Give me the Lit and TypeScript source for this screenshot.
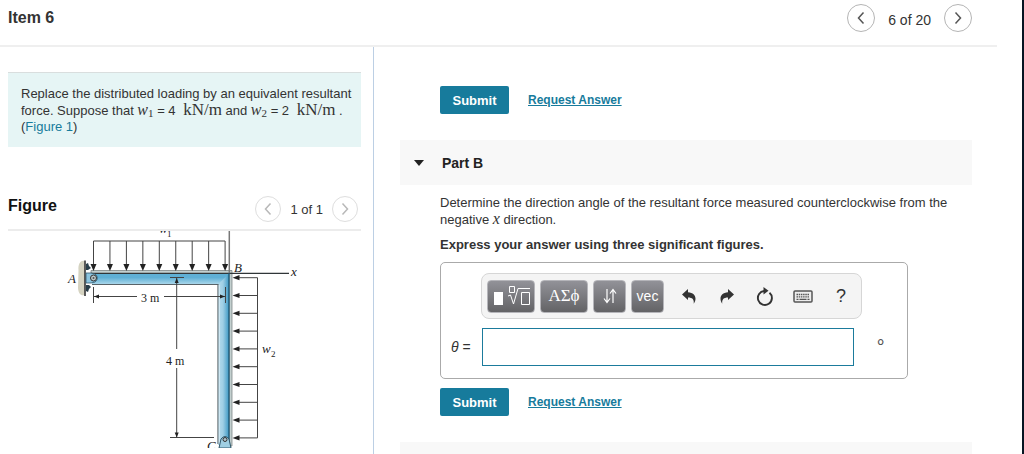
import { LitElement, html, svg, css } from "lit";
import { customElement, property } from "lit/decorators.js";

const chevron = (dir: "left" | "right") => html`<svg viewBox="0 0 12 14" width="12" height="14" aria-hidden="true">
  <path d=${dir === "left" ? "M8.5 1.5 3.5 7l5 5.5" : "M3.5 1.5 8.5 7l-5 5.5"} fill="none" stroke="currentColor" stroke-width="1.5" />
</svg>`;

@customElement("page-stepper")
class PageStepper extends LitElement {
  @property() label = "";
  @property() noun = "item";
  @property({ type: Boolean, reflect: true }) muted = false;

  static styles = css`
    :host { display: flex; align-items: center; gap: 13px; font-size: 14px; color: #333; }
    :host([muted]) { font-size: 13px; gap: 9px; }
    .step {
      box-sizing: border-box; width: 28px; height: 28px; padding: 0; border-radius: 50%;
      border: 1px solid #b5b5b5; background: #fff; color: #555;
      display: flex; align-items: center; justify-content: center;
    }
    :host([muted]) .step { width: 26px; height: 26px; border-color: #dedede; color: #b8b8b8; }
    .label { padding-top: 3px; white-space: nowrap; }
  `;

  render() {
    return html`
      <button class="step" aria-label="Previous ${this.noun}" ?disabled=${this.muted}>${chevron("left")}</button>
      <span class="label">${this.label}</span>
      <button class="step" aria-label="Next ${this.noun}" ?disabled=${this.muted}>${chevron("right")}</button>
    `;
  }
}

@customElement("beam-figure")
class BeamFigure extends LitElement {
  static styles = css`
    :host { display: block; }
    .drawing { display: block; width: 352px; max-width: 100%; height: auto; }
    .label { font: 12px "Liberation Serif", serif; fill: #222; }
    .symbol { font: italic 13px "Liberation Serif", serif; fill: #222; }
    .index { font: 9px "Liberation Serif", serif; fill: #222; }
    .thin { stroke: #444; stroke-width: 1; fill: none; }
    .head { fill: #222; }
  `;

  render() {
    const down = Array.from({ length: 9 }, (_, i) => 93.5 + i * 16.45);
    const side = Array.from({ length: 10 }, (_, i) => 277.7 + i * 17.8);
    return html`<svg class="drawing" viewBox="8 231 352 217" role="img" aria-label="Bent beam ABC under two distributed loads">
      <defs>
        <linearGradient id="top" x1="0" y1="0" x2="0" y2="1">
          <stop offset="0" stop-color="#5fb0d5" /><stop offset=".35" stop-color="#5fb0d5" /><stop offset="1" stop-color="#b4dcee" />
        </linearGradient>
        <linearGradient id="leg" x1="0" y1="0" x2="1" y2="0">
          <stop offset="0" stop-color="#b4dcee" /><stop offset=".45" stop-color="#9fcfe5" /><stop offset="1" stop-color="#3c98c4" />
        </linearGradient>
      </defs>
      <path d="M91 270.5H232V446H229V273.5H91z" fill="#c3d0cf" stroke="#707878" stroke-width=".7" />
      <path d="M92 273.5H229V285H92z" fill="url(#top)" />
      <path d="M218 284.5 229 273.5V445H218z" fill="url(#leg)" />
      <path d="M92 284.5H218V444" fill="none" stroke="#596368" stroke-width="1.2" />
      <path d="M219.2 285V444" stroke="#dceef5" stroke-width="1" />
      <path d="M91 273.4H289" stroke="#303638" stroke-width="1.2" />
      <path d="M229 273V445" stroke="#1d5571" stroke-width="1.3" />
      <path d="M229.3 231V273" stroke="#777" stroke-width="1.5" />

      <path d="M84.5 261C80 260 78 265 78.5 270L78 288C78.5 294 81 296 84.5 295z" fill="#d5d3c1" />
      <path d="M85 260.5V296" stroke="#333" stroke-width="1.6" />
      <path d="M86 264l2-1 1 3 2 2-3 2h-2zM86 285l3 0 2 2-2 2-1 3-2-1z" fill="#293e49" />
      <path d="M86 273h5l4 1c3 2 3 6 0 8l-4 1h-5z" fill="#8bc4df" stroke="#30576a" stroke-width=".8" />
      <circle cx="93.5" cy="278" r="3" fill="#b8c6c8" stroke="#333" />
      <circle cx="93.5" cy="278" r="1" fill="#555" />

      <path class="thin" d="M93.5 241H225.1" />
      ${down.map((x) => svg`<path class="thin" d="M${x} 241V266" /><path class="head" d="M${x - 3} 264h6l-3 7z" />`)}
      <path class="thin" d="M257.5 277.7V437.9" />
      ${side.map((y) => svg`<path class="thin" d="M257.5 ${y}H236" /><path class="head" d="M239.5 ${y - 2.6}v5.2l-7-2.6z" />`)}

      <path class="thin" d="M93.5 287V303M225.5 287V303M94 296.5H137M164 296.5H225" />
      <path class="head" d="M94 296.5l5-2v4zM225 296.5l-5-2v4z" />
      <path class="thin" d="M170 277.5H184M176.7 278V349M176.7 368V437M170 437.5H214" />
      <path class="head" d="M176.7 278l-2 5h4zM176.7 437.5l-2-5h4z" />

      <path d="M219 448l2-9q4-5 8 0l2 9z" fill="#9fcfe3" stroke="#30576a" stroke-width="1" />
      <circle cx="225" cy="439.5" r="2" fill="#aac0c8" stroke="#333" />

      <text class="symbol" x="159" y="233">w</text><text class="index" x="167" y="237">1</text>
      <text class="symbol" x="68" y="283">A</text>
      <text class="symbol" x="234" y="272">B</text>
      <text class="symbol" x="207" y="450">C</text>
      <text class="symbol" x="291" y="276">x</text>
      <text class="symbol" x="262" y="353">w</text><text class="index" x="271" y="357">2</text>
      <text class="label" x="141" y="302">3 m</text>
      <text class="label" x="166" y="365">4 m</text>
    </svg>`;
  }
}

@customElement("math-answer")
class MathAnswer extends LitElement {
  static styles = css`
    :host { display: block; }
    .box { box-sizing: border-box; max-width: 468px; border: 1px solid #aaa; border-radius: 5px; padding: 10px 44px 12px 10px; }
    .tools {
      box-sizing: border-box; margin-left: 30px; margin-right: 1px; height: 46px; padding: 0 5px; border: 1px solid #d6d6d6; border-radius: 8px;
      background: #f4f4f4; display: flex; align-items: center; gap: 5px;
    }
    .key, .tool { box-sizing: border-box; padding: 0; border: 0; display: flex; align-items: center; justify-content: center; }
    .key {
      height: 33px; width: 33px; border: 1px solid #b5b5ba; border-radius: 4px; color: #fff;
      background: linear-gradient(#929298, #636366); font: 14px "Liberation Sans", sans-serif;
    }
    .wide { width: 48px; }
    .greek { font: 17px "Liberation Serif", serif; }
    .icons { display: flex; margin-left: 6px; gap: 10px; }
    .tool { width: 28px; height: 30px; background: none; color: #333; font: 18px "Liberation Sans", sans-serif; }
    .row { display: flex; align-items: center; margin-top: 9px; }
    .name { width: 31px; font-size: 14px; color: #333; white-space: nowrap; }
    .entry { flex: 1; min-width: 0; display: flex; margin-right: -24px; }
    .field {
      box-sizing: border-box; flex: 1; min-width: 0; height: 38px; border: 1px solid #1b7b9c; border-radius: 0;
      padding: 0 8px; font: 14px "Liberation Sans", sans-serif; outline: none;
    }
    .unit { width: 33px; padding-left: 0; text-align: center; box-sizing: border-box; font-size: 18px; line-height: 26px; color: #555; padding-left: 20px; }
  `;

  render() {
    return html`<div class="box">
      <div class="tools" role="toolbar" aria-label="Equation tools">
        <button class="key wide" aria-label="Templates">
          <svg width="40" height="25" viewBox="0 0 40 25" fill="none" stroke="#fff">
            <path d="M3 8h9v13H3z" fill="#fff" stroke="none" />
            <path d="M18.5 2.500h5v6h-5zM17 12l2.500-1 3 9 4.500-15.500H39M30.500 8.500h8v12h-8z" />
          </svg>
        </button>
        <button class="key wide greek" aria-label="Symbols">ΑΣϕ</button>
        <button class="key" aria-label="Arrows">
          <svg width="14" height="18" viewBox="0 0 14 18" fill="none" stroke="#fff"><path d="M4 2v13M1 11.500 4 15.500l3-4M10 16V3M7 6.500 10 2.500l3 4" stroke-width="1.200" /></svg>
        </button>
        <button class="key" aria-label="Vector">vec</button>
        <div class="icons">
          <button class="tool" aria-label="Undo">
            <svg width="14" height="15" viewBox="0 0 14 15"><path d="M0 5.500 6 0v3.200c5 .2 7.500 3.300 7.500 6.300 0 2-.6 3.500-1.800 5.300.6-4.300-1.200-6.300-5.700-6.300V11z" fill="currentColor" /></svg>
          </button>
          <button class="tool" aria-label="Redo">
            <svg width="14" height="15" viewBox="0 0 14 15"><path d="M14 5.500 8 0v3.200C3 3.400.5 6.500.5 9.500c0 2 .6 3.500 1.800 5.300C1.700 10.500 3.500 8.500 8 8.500V11z" fill="currentColor" /></svg>
          </button>
          <button class="tool" aria-label="Reset">
            <svg width="18" height="19" viewBox="0 0 18 19"><path d="M13.500 5.700A7 7 0 1 1 8.500 4" fill="none" stroke="currentColor" stroke-width="1.900" /><path d="M7.500 0 12.500 3.800 7.500 7.500z" fill="currentColor" /></svg>
          </button>
          <button class="tool" aria-label="Keyboard">
            <svg width="20" height="16" viewBox="0 0 20 16"><rect x="1" y="3" width="18" height="11" rx="1" fill="#ededed" stroke="#555" stroke-width="1.500" /><path d="M3.500 6.500h13M3.500 8.800h13" stroke="#555" stroke-width="1.300" stroke-dasharray="1.500 .7" /><path d="M3.500 11.300h2M6.500 11.300h7M14.500 11.300h2" stroke="#555" stroke-width="1.300" /></svg>
          </button>
          <button class="tool" aria-label="Help">?</button>
        </div>
      </div>
      <div class="row">
        <label class="name" for="theta"><i>θ</i> =</label>
        <div class="entry"><input class="field" id="theta" type="text" /><span class="unit">∘</span></div>
      </div>
    </div>`;
  }
}

@customElement("app-root")
class AppRoot extends LitElement {
  static styles = css`
    :host {
      box-sizing: border-box; display: flex; flex-direction: column; min-height: 100vh; background: #fff;
      border-right: 2px solid #071523; font: 13px/16px "Liberation Sans", Arial, sans-serif; color: #333;
    }
    .header {
      box-sizing: border-box; height: 47px; margin-right: 25px; padding: 4px 25px 0 8px; border-bottom: 2px solid #efefef;
      display: flex; justify-content: space-between; align-items: flex-start;
    }
    .item { margin: 5px 0 0; font-size: 16px; line-height: 18px; color: #333; }
    .columns { flex: 1; display: grid; grid-template-columns: 374px minmax(0, 1fr); }
    .left { box-sizing: border-box; border-right: 1px solid #bccfe4; padding: 25px 12px 0 8px; }
    .prompt { box-sizing: border-box; min-height: 75px; border-top: 1px solid #d9dede; background: #e6f5f5; padding: 13px 0 9px 13px; }
    p { margin: 0; }
    a { color: #177b9c; }
    .plain { text-decoration: none; }
    .math { font-family: "Liberation Serif", serif; font-size: 16px; line-height: 16px; }
    .math sub { font-size: 11px; line-height: 11px; vertical-align: -2px; }
    .units { margin-left: 4px; font-size: 17px; }
    .caption { display: flex; justify-content: space-between; align-items: center; height: 35px; margin-top: 47px; padding-right: 3px; border-bottom: 2px solid #ececec; }
    .title { margin: 0 0 12px; font-size: 16px; line-height: 18px; color: #111; }
    .stepper { margin-bottom: 6px; }
    .right { display: flex; flex-direction: column; padding: 39px 50px 0 26px; }
    .actions { display: flex; align-items: center; gap: 19px; padding-left: 40px; }
    .submit { width: 69px; height: 28px; padding: 0; border: 0; border-radius: 2px; background: #177b9c; color: #fff; font: bold 13px "Liberation Sans", sans-serif; }
    .request { font-size: 12px; font-weight: bold; }
    .part { box-sizing: border-box; height: 45px; margin-top: 26px; padding-left: 14px; background: #f8f8f8; display: flex; align-items: center; gap: 18px; }
    .toggle { width: 10px; height: 10px; padding: 0; border: 0; background: none; display: flex; align-items: center; }
    .part-name { margin: 0; font-size: 14px; line-height: 18px; color: #222; }
    .body { padding: 10px 0 9px 40px; }
    .hint { margin: 9px 0; font-weight: bold; }
    .next { flex: 1; min-height: 12px; margin-top: 26px; background: #f8f8f8; }
  `;

  private actions() {
    return html`<div class="actions"><button class="submit">Submit</button><a class="request" href="#answer">Request Answer</a></div>`;
  }

  render() {
    return html`
      <header class="header">
        <h1 class="item">Item 6</h1>
        <page-stepper label="6 of 20"></page-stepper>
      </header>
      <div class="columns">
        <aside class="left">
          <p class="prompt">
            Replace the distributed loading by an equivalent resultant force. Suppose that
            <span class="math"><i>w</i><sub>1</sub></span> = 4 <span class="math units">kN/m</span> and
            <span class="math"><i>w</i><sub>2</sub></span> = 2 <span class="math units">kN/m</span> .<br />(<a class="plain" href="#figure">Figure 1</a>)
          </p>
          <div class="caption" id="figure">
            <h2 class="title">Figure</h2>
            <page-stepper class="stepper" label="1 of 1" noun="figure" muted></page-stepper>
          </div>
          <beam-figure></beam-figure>
        </aside>
        <main class="right">
          ${this.actions()}
          <div class="part">
            <button class="toggle" aria-label="Collapse Part B" aria-expanded="true"><svg width="10" height="6" viewBox="0 0 10 6"><path d="M0 0h10L5 6z" fill="#222" /></svg></button>
            <h2 class="part-name">Part B</h2>
          </div>
          <div class="body">
            <p>Determine the direction angle of the resultant force measured counterclockwise from the negative <i class="math">x</i> direction.</p>
            <p class="hint">Express your answer using three significant figures.</p>
            <math-answer></math-answer>
          </div>
          ${this.actions()}
          <div class="next"></div>
        </main>
      </div>
    `;
  }
}
